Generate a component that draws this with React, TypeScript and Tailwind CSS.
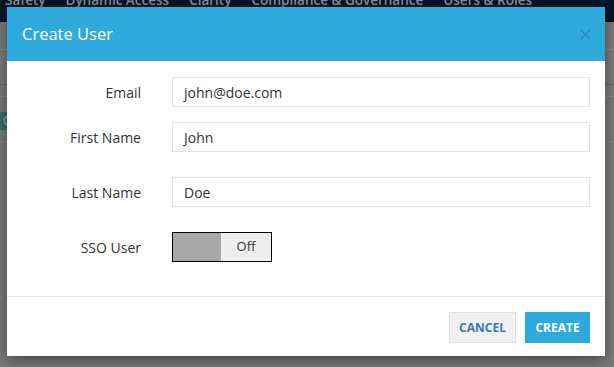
const navItems = ['Safety', 'Dynamic Access', 'Clarity', 'Compliance & Governance', 'Users & Roles'];

function Field({ label, value, className = '' }: { label: string; value: string; className?: string }) {
  return (
    <div className={`flex items-center ${className}`}>
      <label className="w-[134px] text-right text-[14px] text-[#333]">{label}</label>
      <div className="ml-[31px] flex h-[30px] w-[418px] items-center border border-[#e3e3e3] px-[11px] text-[14px] text-[#333]">
        {value}
      </div>
    </div>
  );
}

export default function App() {
  return (
    <div
      className="relative h-[367px] w-[614px] overflow-hidden bg-[#7b7b7b]"
      style={{ fontFamily: '"Open Sans", "Liberation Sans", sans-serif' }}
    >
      {/* page behind the overlay */}
      <div className="flex h-[22px] items-start gap-[20px] overflow-hidden bg-[#051628] pl-[5px]">
        {navItems.map((n) => (
          <span key={n} className="-mt-[7px] whitespace-nowrap text-[13.5px] font-semibold leading-[14px] text-[#8a929c]">
            {n}
          </span>
        ))}
      </div>
      <div className="h-[28px] border-b border-[#8c8c8c]" />
      <div className="h-[35px] border-b border-[#6a6a6a]" />
      <div className="h-[12px] border-b border-[#888]" />
      <div className="mt-[15px] flex h-[18px] w-[40px] items-center bg-[#3e6d67] pl-[3px] text-[12px] text-[#9bb]">C</div>
      <div className="h-[12px] border-b border-[#888]" />

      {/* modal */}
      <div className="absolute left-[7px] top-[7px] w-[598px] bg-white shadow-[0_4px_14px_rgba(0,0,0,0.45)]">
        <div className="flex h-[54px] items-center justify-between bg-[#2eabdc] pl-[15px] pr-[14px]">
          <h2 className="text-[16.5px] text-white">Create User</h2>
          <svg width="11" height="11" viewBox="0 0 11 11" className="mt-[1px]">
            <path d="M1 1L10 10M10 1L1 10" stroke="#2889b3" strokeWidth="1.6" />
          </svg>
        </div>
        <div className="pt-[16px] pb-[34px]">
          <Field label="Email" value="john@doe.com" />
          <Field label="First Name" value="John" className="mt-[15px]" />
          <Field label="Last Name" value="Doe" className="mt-[25px]" />
          <div className="mt-[25px] flex items-center">
            <label className="w-[134px] text-right text-[14px] text-[#333]">SSO User</label>
            <div className="ml-[31px] flex h-[30px] w-[100px] border border-black">
              <div className="w-[48px] bg-[#a8a8a8]" />
              <div className="flex flex-1 items-center justify-center bg-[#efefef] text-[13px] text-[#333]">Off</div>
            </div>
          </div>
        </div>
        <div className="flex justify-end gap-[9px] border-t border-[#e5e5e5] pt-[15px] pb-[13px] pr-[15px]">
          <button className="h-[31px] w-[67px] border border-[#e2e2e2] bg-[#f1f1f1] text-[12px] font-bold text-[#3d77b6]">
            CANCEL
          </button>
          <button className="h-[31px] w-[65px] bg-[#2eabdc] text-[12px] font-bold text-white">CREATE</button>
        </div>
      </div>
    </div>
  );
}
